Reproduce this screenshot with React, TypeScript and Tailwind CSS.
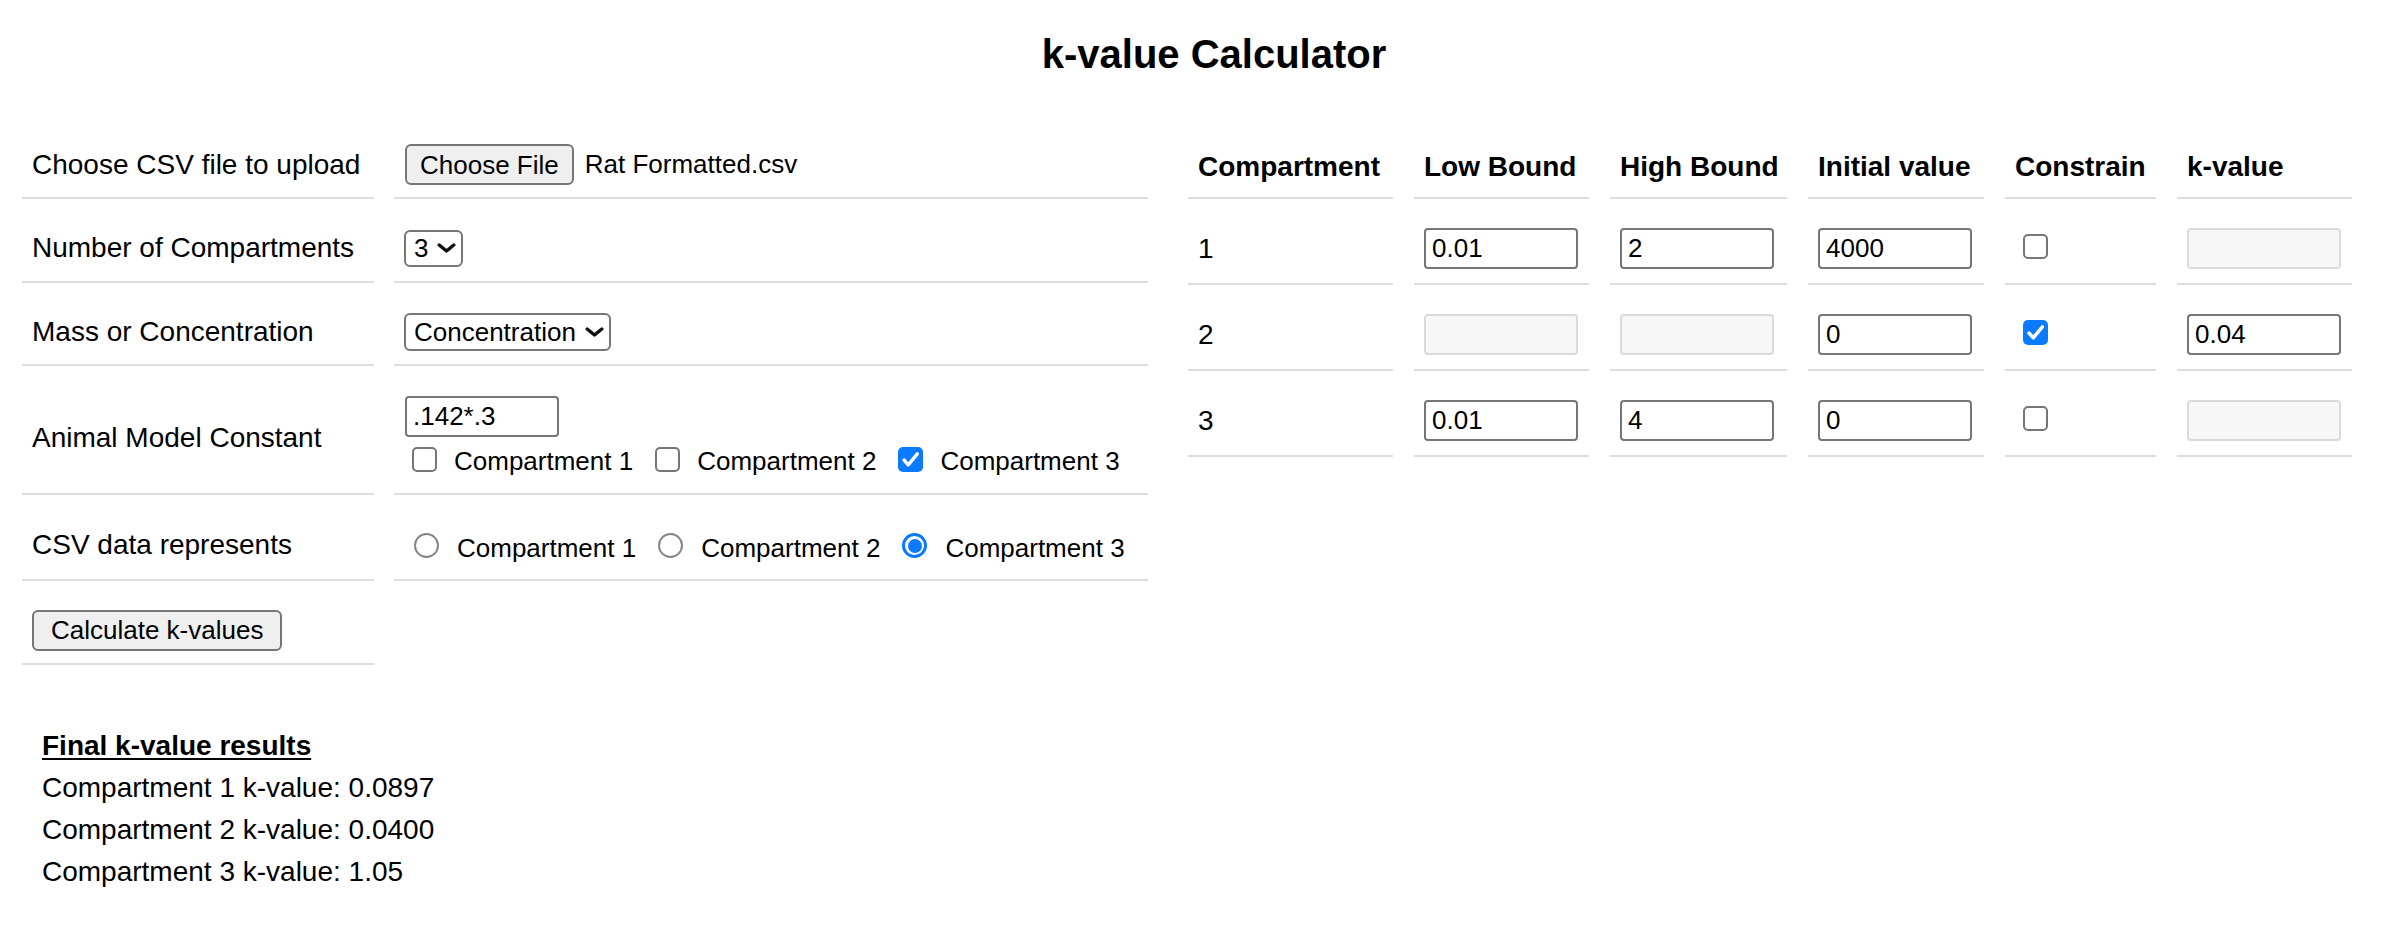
import React from "react";

type BoxProps = { checked?: boolean; className?: string };

function Checkbox({ checked, className = "" }: BoxProps) {
  if (checked) {
    return (
      <span className={`inline-flex h-[25px] w-[25px] shrink-0 items-center justify-center rounded-[5px] bg-[#0a7aff] ${className}`}>
        <svg width="25" height="25" viewBox="0 0 25 25" fill="none">
          <path d="M6 13L10.3 17.8L19.3 6.8" stroke="#fff" strokeWidth="3.4" strokeLinecap="round" strokeLinejoin="round" />
        </svg>
      </span>
    );
  }
  return <span className={`inline-block h-[25px] w-[25px] shrink-0 rounded-[5px] border-2 border-[#767676] bg-white ${className}`} />;
}

function Radio({ checked, className = "" }: BoxProps) {
  if (checked) {
    return (
      <span className={`inline-flex h-[25px] w-[25px] shrink-0 items-center justify-center rounded-full border-[3px] border-[#0a7aff] bg-white ${className}`}>
        <span className="h-[14px] w-[14px] rounded-full bg-[#0a7aff]" />
      </span>
    );
  }
  return <span className={`inline-block h-[25px] w-[25px] shrink-0 rounded-full border-2 border-[#858585] bg-white ${className}`} />;
}

function Chevron() {
  return (
    <svg width="19" height="10" viewBox="0 0 19 10" fill="none">
      <path d="M2.2 2L9.5 8L16.8 2" stroke="#111" strokeWidth="3.4" strokeLinecap="round" strokeLinejoin="round" />
    </svg>
  );
}

function FakeSelect({ value, h }: { value: string; h: string }) {
  return (
    <div className={`inline-flex items-center rounded-[6px] border-2 border-[#767676] bg-white pl-[8px] pr-[5px] text-[26px] leading-none ${h}`}>
      <span>{value}</span>
      <span className="ml-[9px] flex">
        <Chevron />
      </span>
    </div>
  );
}

function Field({ value = "", disabled }: { value?: string; disabled?: boolean }) {
  return (
    <input
      readOnly
      disabled={disabled}
      defaultValue={value}
      className={`h-[41px] w-[154px] rounded-[4px] border-2 px-[6px] text-[26px] text-black outline-none ${
        disabled ? "border-[#dadada] bg-[#f7f7f7]" : "border-[#767676] bg-white"
      }`}
    />
  );
}

function Button({ children }: { children: React.ReactNode }) {
  return (
    <button className="h-[41px] rounded-[6px] border-2 border-[#767676] bg-[#efefef] px-[13px] text-[26px] leading-none text-black">
      {children}
    </button>
  );
}

const cell = "flex items-center border-b-2 border-[#dddddd]";

const rows = [
  { n: "1", low: "0.01", high: "2", init: "4000", constrain: false, k: "" },
  { n: "2", low: "", high: "", init: "0", constrain: true, k: "0.04" },
  { n: "3", low: "0.01", high: "4", init: "0", constrain: false, k: "" },
];

const headers = ["Compartment", "Low Bound", "High Bound", "Initial value", "Constrain", "k-value"];

export default function App() {
  return (
    <div className="min-h-screen bg-white pl-[20px] font-['Liberation_Sans',Arial,sans-serif] text-[28px] text-black">
      <h1 className="pt-[32px] text-center text-[40px] font-bold leading-[45px]">k-value Calculator</h1>

      <div className="mt-[55px] flex items-start gap-[40px] pl-[2px]">
        {/* left form */}
        <div className="grid grid-cols-[352px_754px] gap-x-[20px] gap-y-[16px]">
          <div className={`${cell} h-[67px] pl-[10px]`}>Choose CSV file to upload</div>
          <div className={`${cell} h-[67px] pl-[11px] text-[26px]`}>
            <Button>Choose File</Button>
            <span className="ml-[11px]">Rat Formatted.csv</span>
          </div>

          <div className={`${cell} h-[68px] pl-[10px]`}>Number of Compartments</div>
          <div className={`${cell} h-[68px] pl-[10px]`}>
            <FakeSelect value="3" h="h-[37px]" />
          </div>

          <div className={`${cell} h-[67px] pl-[10px]`}>Mass or Concentration</div>
          <div className={`${cell} h-[67px] pl-[10px]`}>
            <FakeSelect value="Concentration" h="h-[38px]" />
          </div>

          <div className={`${cell} h-[113px] pl-[10px]`}>Animal Model Constant</div>
          <div className="flex h-[113px] flex-col items-start border-b-2 border-[#dddddd] pl-[11px] pt-[14px]">
            <Field value=".142*.3" />
            <div className="mt-[8px] flex h-[32px] items-center gap-x-[15px] text-[26px]">
              {[false, false, true].map((c, i) => (
                <span key={i} className="flex items-center">
                  <Checkbox checked={c} className="mb-[4px] ml-[7px] mr-[17px]" />
                  Compartment {i + 1}
                </span>
              ))}
            </div>
          </div>

          <div className={`${cell} h-[70px] pl-[10px]`}>CSV data represents</div>
          <div className={`${cell} h-[70px] gap-x-[13px] pl-[11px] pt-[6px] text-[26px]`}>
            {[false, false, true].map((c, i) => (
              <span key={i} className="flex items-center">
                <Radio checked={c} className="mb-[5px] ml-[9px] mr-[18px]" />
                Compartment {i + 1}
              </span>
            ))}
          </div>

          <div className={`${cell} h-[68px] pl-[10px]`}>
            <Button>
              <span className="px-[4px]">Calculate k-values</span>
            </Button>
          </div>
        </div>

        {/* right table */}
        <div className="grid grid-cols-[205px_175px_177px_176px_151px_175px] gap-x-[21px] gap-y-[15px]">
          {headers.map((h) => (
            <div key={h} className={`${cell} h-[67px] pl-[10px] pt-[5px] font-bold`}>
              {h}
            </div>
          ))}
          {rows.map((r) => (
            <React.Fragment key={r.n}>
              <div className={`${cell} h-[71px] pl-[10px]`}>{r.n}</div>
              <div className={`${cell} h-[71px] pl-[10px]`}>
                <Field value={r.low} disabled={!r.low} />
              </div>
              <div className={`${cell} h-[71px] pl-[10px]`}>
                <Field value={r.high} disabled={!r.high} />
              </div>
              <div className={`${cell} h-[71px] pl-[10px]`}>
                <Field value={r.init} />
              </div>
              <div className={`${cell} h-[71px] pl-[10px]`}>
                <Checkbox checked={r.constrain} className="mb-[4px] ml-[8px]" />
              </div>
              <div className={`${cell} h-[71px] pl-[10px]`}>
                <Field value={r.k} disabled={!r.k} />
              </div>
            </React.Fragment>
          ))}
        </div>
      </div>

      <div className="mt-[60px] pl-[22px] leading-[42px]">
        <div className="font-bold underline decoration-2 underline-offset-[3px]">Final k-value results</div>
        <div>Compartment 1 k-value: 0.0897</div>
        <div>Compartment 2 k-value: 0.0400</div>
        <div>Compartment 3 k-value: 1.05</div>
      </div>
    </div>
  );
}
